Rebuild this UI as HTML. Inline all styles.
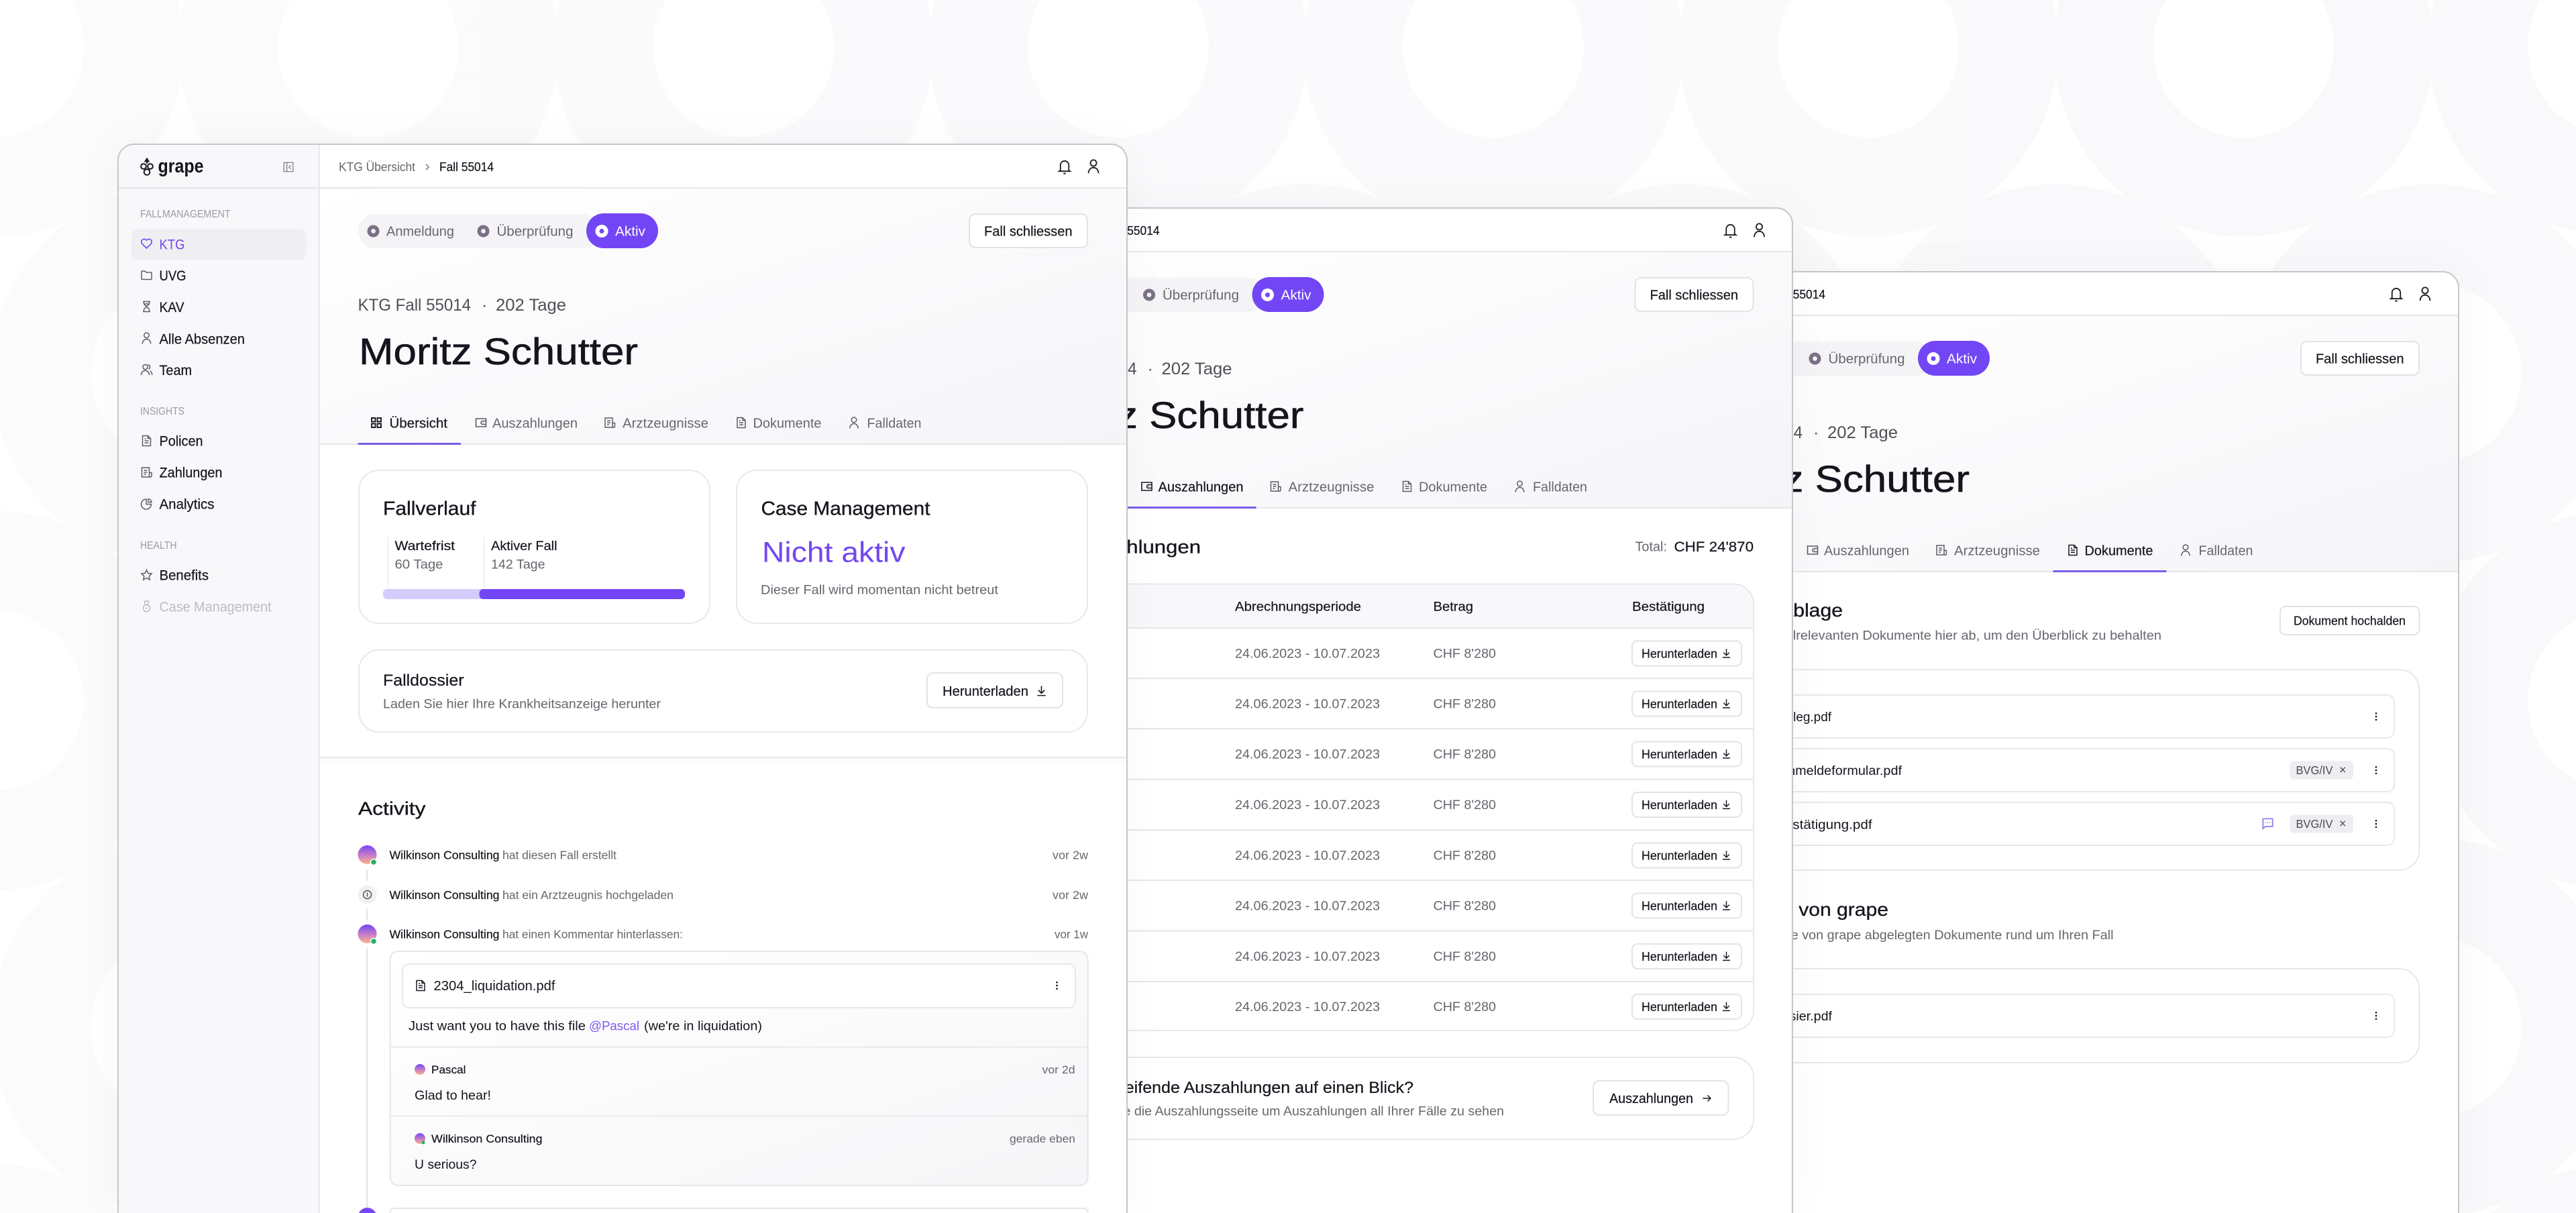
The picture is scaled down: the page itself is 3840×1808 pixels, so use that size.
<!DOCTYPE html>
<html lang="de"><head><meta charset="utf-8"><title>grape</title>
<style>
html,body{margin:0;padding:0;background:#fff;width:3840px;height:1808px;overflow:hidden}
svg{display:block}
text{font-family:"Liberation Sans",sans-serif;fill:#16141d;white-space:pre}
.g{fill:#66666e}.l{fill:#9b9ba3}.w{fill:#fff}.p{fill:#7346f1}
.m{stroke:#16141d;stroke-width:.22}
.h{stroke:#16141d;stroke-width:.35}
.n{stroke:#16141d;stroke-width:.6}
.i{color:#5c5c66}.k{color:#1b1922}.x{color:#7346f1}
.btn{fill:#fff;stroke:#e3e3e7;stroke-width:2}
.ln{stroke:#e6e6ea;stroke-width:2}
.crd{fill:#fff;stroke:#e8e8ec;stroke-width:2}
.win{fill:#fff;stroke:#c6c6cb;stroke-width:2}
</style></head><body>
<svg xmlns="http://www.w3.org/2000/svg" width="3840" height="1808" viewBox="0 0 3840 1808">
<defs>
<pattern id="pt" patternUnits="userSpaceOnUse" x="-10" y="70" width="1118" height="974">
<g fill="#f9f9fb"><circle cx="0" cy="0" r="283"/><circle cx="559" cy="0" r="283"/><circle cx="1118" cy="0" r="283"/><circle cx="-279" cy="487" r="283"/><circle cx="280" cy="487" r="283"/><circle cx="839" cy="487" r="283"/><circle cx="1398" cy="487" r="283"/><circle cx="0" cy="974" r="283"/><circle cx="559" cy="974" r="283"/><circle cx="1118" cy="974" r="283"/></g>
<g fill="#fff"><circle cx="0" cy="0" r="135"/><circle cx="559" cy="0" r="135"/><circle cx="1118" cy="0" r="135"/><circle cx="280" cy="487" r="135"/><circle cx="839" cy="487" r="135"/><circle cx="0" cy="974" r="135"/><circle cx="559" cy="974" r="135"/><circle cx="1118" cy="974" r="135"/></g>
</pattern>
<linearGradient id="ov" x1="0" y1="0" x2="1" y2="0"><stop offset="0" stop-color="#fff" stop-opacity=".35"/><stop offset="1" stop-color="#fff" stop-opacity="0"/></linearGradient>
<linearGradient id="hd" x1="0" y1="0" x2="1" y2="1"><stop offset="0" stop-color="#fff"/><stop offset="1" stop-color="#f5f5f8"/></linearGradient>
<linearGradient id="cm" x1="0" y1="0" x2="1" y2="1"><stop offset="0" stop-color="#fff"/><stop offset="1" stop-color="#f6f6f8"/></linearGradient>
<linearGradient id="av" x1="0" y1="0" x2="0" y2="1"><stop offset="0" stop-color="#7547f3"/><stop offset=".55" stop-color="#c77fc4"/><stop offset="1" stop-color="#ffb28e"/></linearGradient>
<linearGradient id="fd" x1="0" y1="0" x2="0" y2="1"><stop offset="0" stop-color="#f8f8fa"/><stop offset="1" stop-color="#fff"/></linearGradient>
<filter id="sh" x="-5%" y="-5%" width="110%" height="110%"><feDropShadow dx="0" dy="0" stdDeviation="28" flood-color="#000" flood-opacity=".03"/></filter>
<symbol id="heart" viewBox="0 0 20 20"><path d="M10 17 3.4 10.4A4.2 4.2 0 0 1 9.5 4.6l.5.5.5-.5a4.2 4.2 0 0 1 6.100 5.800z" fill="none" stroke="currentColor" stroke-width="1.600"/></symbol>
<symbol id="folder" viewBox="0 0 20 20"><path d="M2.500 5a1 1 0 0 1 1-1h4l2 2h7a1 1 0 0 1 1 1v8.500a1 1 0 0 1-1 1h-13a1 1 0 0 1-1-1z" fill="none" stroke="currentColor" stroke-width="1.500"/></symbol>
<symbol id="glass" viewBox="0 0 20 20"><path d="M4.500 2.500h11M4.500 17.500h11M6 2.500v3c0 2 4 3.500 4 4.500s-4 2.500-4 4.500v3M14 2.500v3c0 2-4 3.500-4 4.500s4 2.500 4 4.500v3M7 6h6" fill="none" stroke="currentColor" stroke-width="1.500"/></symbol>
<symbol id="user" viewBox="0 0 20 20"><circle cx="10" cy="5.800" r="3.800" fill="none" stroke="currentColor" stroke-width="1.500"/><path d="M3.800 18.500c0-4 2.600-7 6.200-7s6.200 3 6.200 7" fill="none" stroke="currentColor" stroke-width="1.500"/></symbol>
<symbol id="users" viewBox="0 0 20 20"><circle cx="8" cy="6" r="3.600" fill="none" stroke="currentColor" stroke-width="1.500"/><path d="M2 18c0-4 2.500-6.500 6-6.500s6 2.500 6 6.500M12 2.600a3.600 3.600 0 0 1 1 6.800M15.200 12c2 1 3 3 3 6" fill="none" stroke="currentColor" stroke-width="1.500"/></symbol>
<symbol id="doc" viewBox="0 0 20 20"><path d="M4 2.500h8l4 4v11H4zM12 2.500v4h4M7 10h6M7 13.200h6M7 7h2" fill="none" stroke="currentColor" stroke-width="1.500"/></symbol>
<symbol id="rcpt" viewBox="0 0 20 20"><path d="M3 3h11v14H3zM14 10.500h3.500v5a1.700 1.700 0 0 1-3.500 0M6 7h5M6 10h5M6 13h3" fill="none" stroke="currentColor" stroke-width="1.500"/></symbol>
<symbol id="pie" viewBox="0 0 20 20"><path d="M9.500 3a7.500 7.500 0 1 0 7.500 7.500H9.500zM12.500 2.500a6 6 0 0 1 5 5h-5z" fill="none" stroke="currentColor" stroke-width="1.500"/></symbol>
<symbol id="star" viewBox="0 0 20 20"><path d="M10 2.500l2.300 4.900 5.200.7-3.800 3.700 1 5.300L10 14.500l-4.700 2.600 1-5.300L2.500 8.100l5.200-.7z" fill="none" stroke="currentColor" stroke-width="1.500"/></symbol>
<symbol id="medal" viewBox="0 0 20 20"><circle cx="10" cy="12.500" r="5" fill="none" stroke="currentColor" stroke-width="1.500"/><path d="M7 2h6l-1.200 5.600H8.200zM8.500 12.500h3" fill="none" stroke="currentColor" stroke-width="1.500"/></symbol>
<symbol id="grid" viewBox="0 0 20 20"><path d="M3 3h5.500v5.500H3zM11.500 3H17v5.500h-5.500zM3 11.500h5.500V17H3zM11.500 11.500H17V17h-5.500z" fill="none" stroke="currentColor" stroke-width="1.900"/></symbol>
<symbol id="wal" viewBox="0 0 20 20"><path d="M2.500 4h15v12h-15zM17.500 7.500h-5a2.500 2.500 0 0 0 0 5h5M12.500 10h1" fill="none" stroke="currentColor" stroke-width="1.600"/></symbol>
<symbol id="bell" viewBox="0 0 20 20"><path d="M4.800 15V8.500a5.200 5.200 0 0 1 10.400 0V15l1.500 1H3.300zM8.500 18.800h3" fill="none" stroke="currentColor" stroke-width="1.500"/></symbol>
<symbol id="dl" viewBox="0 0 20 20"><path d="M10 2.500v11M5 9l5 5 5-5M3.500 17.500h13" fill="none" stroke="currentColor" stroke-width="1.700"/></symbol>
<symbol id="arr" viewBox="0 0 20 20"><path d="M3 10h13M11 5l5 5-5 5" fill="none" stroke="currentColor" stroke-width="1.700"/></symbol>
<symbol id="chev" viewBox="0 0 20 20"><path d="M7 4l6 6-6 6" fill="none" stroke="currentColor" stroke-width="1.800"/></symbol>
<symbol id="col" viewBox="0 0 20 20"><path d="M1.500 1.500h17v17h-17zM7 1.500v17M14.500 6.500 11 10l3.500 3.500" fill="none" stroke="currentColor" stroke-width="1.500"/></symbol>
<symbol id="chat" viewBox="0 0 20 20"><path d="M2.500 2.500h15v12H7l-4.500 3.500z" fill="none" stroke="currentColor" stroke-width="1.700"/><path d="M6.500 8.500h1M9.500 8.500h1M12.500 8.500h1" stroke="currentColor" stroke-width="1.700"/></symbol>
<symbol id="keb" viewBox="0 0 8 20"><circle cx="4" cy="4" r="1.700" fill="currentColor"/><circle cx="4" cy="10" r="1.700" fill="currentColor"/><circle cx="4" cy="16" r="1.700" fill="currentColor"/></symbol>
<symbol id="step" viewBox="0 0 20 20"><circle cx="10" cy="10" r="9.500" fill="currentColor"/><circle cx="10" cy="10" r="3.500" fill="#f4f4f6"/></symbol>
</defs>

<!-- background -->
<rect width="3840" height="1808" fill="#fff"/>
<rect width="3840" height="1808" fill="url(#pt)"/>
<rect width="3840" height="1808" fill="url(#ov)"/>

<!-- WINDOW 3 -->
<g transform="translate(1985,190)">
<path d="M176 1618V239a24 24 0 0 1 24-24H1656a24 24 0 0 1 24 24V1618" class="win" filter="url(#sh)"/>
<rect x="477" y="280" width="1202" height="382" fill="url(#hd)"/>
<line x1="477" y1="280" x2="1679" y2="280" class="ln"/>
<line x1="477" y1="662" x2="1679" y2="662" class="ln"/>
<text x="505" y="255" font-size="18.500" textLength="114" lengthAdjust="spacingAndGlyphs" class="g">KTG Übersicht</text>
<text x="655" y="255" font-size="18.500" textLength="81" lengthAdjust="spacingAndGlyphs" class="m">Fall 55014</text>
<use href="#bell" x="1575" y="236" width="24" height="24" class="k"/>
<use href="#user" x="1618" y="236" width="24" height="24" class="k"/>
<rect x="534" y="319" width="360" height="51" rx="25.500" fill="#f4f4f6"/>
<use href="#step" x="547" y="335" width="19" height="19" style="color:#7b7086"/>
<text x="576" y="351.500" font-size="20.500" textLength="101" lengthAdjust="spacingAndGlyphs" class="g">Anmeldung</text>
<use href="#step" x="711" y="335" width="19" height="19" style="color:#7b7086"/>
<text x="740.500" y="351.500" font-size="20.500" textLength="114" lengthAdjust="spacingAndGlyphs" class="g">Überprüfung</text>
<rect x="874" y="318" width="107" height="52" rx="26" fill="#7346f5"/>
<circle cx="897" cy="344.500" r="9.500" fill="#fff"/><circle cx="897" cy="344.500" r="3.500" fill="#7346f5"/>
<text x="917" y="351.500" font-size="20.500" textLength="45" lengthAdjust="spacingAndGlyphs" class="w">Aktiv</text>
<rect x="1445" y="319" width="176" height="50" rx="9" class="btn"/>
<text x="1467" y="351.500" font-size="20" textLength="131.500" lengthAdjust="spacingAndGlyphs" class="m">Fall schliessen</text>
<text x="533.500" y="463" font-size="25" textLength="168.500" lengthAdjust="spacingAndGlyphs" style="fill:#4f4f57">KTG Fall 55014</text>
<text x="718" y="463" font-size="25" style="fill:#4f4f57">·</text>
<text x="739" y="463" font-size="25" textLength="105" lengthAdjust="spacingAndGlyphs" style="fill:#4f4f57">202 Tage</text>
<text x="535" y="543" font-size="56" textLength="416" lengthAdjust="spacingAndGlyphs" class="n">Moritz Schutter</text>
<use href="#wal" x="707" y="620" width="20" height="20" class="i"/>
<text x="734" y="637.500" font-size="20" textLength="127" lengthAdjust="spacingAndGlyphs" class="g">Auszahlungen</text>
<use href="#rcpt" x="899" y="620" width="20" height="20" class="i"/>
<text x="928" y="637.500" font-size="20" textLength="128" lengthAdjust="spacingAndGlyphs" class="g">Arztzeugnisse</text>
<use href="#doc" x="1095" y="620" width="20" height="20" class="k"/>
<text x="1122.500" y="637.500" font-size="20" textLength="102" lengthAdjust="spacingAndGlyphs" class="m">Dokumente</text>
<use href="#user" x="1263" y="620" width="20" height="20" class="i"/>
<text x="1292.500" y="637.500" font-size="20" textLength="81" lengthAdjust="spacingAndGlyphs" class="g">Falldaten</text>
<rect x="1075.500" y="660" width="169" height="3" fill="#7b5ce8"/>
</g>
<text x="2519" y="919" font-size="28" textLength="228" lengthAdjust="spacingAndGlyphs" class="h">Dokumentablage</text>
<text x="2519" y="953.500" font-size="19.500" textLength="703" lengthAdjust="spacingAndGlyphs" class="g">Legen Sie alle fallrelevanten Dokumente hier ab, um den Überblick zu behalten</text>
<rect x="3399" y="904" width="207.500" height="42" rx="8" class="btn"/>
<text x="3419" y="931.500" font-size="18" textLength="167" lengthAdjust="spacingAndGlyphs" class="m">Dokument hochalden</text>
<rect x="2520" y="998" width="1086.500" height="299" rx="30" class="crd"/>
<rect x="2557" y="1036" width="1012" height="64" rx="10" class="crd"/>
<rect x="2557" y="1116" width="1012" height="64" rx="10" class="crd"/>
<rect x="2557" y="1196" width="1012" height="64" rx="10" class="crd"/>
<text x="2610" y="1075" font-size="19.500" textLength="120" lengthAdjust="spacingAndGlyphs">Lohnbeleg.pdf</text>
<text x="2600" y="1155" font-size="19.500" textLength="235" lengthAdjust="spacingAndGlyphs">KTG_Anmeldeformular.pdf</text>
<text x="2585" y="1235.500" font-size="19.500" textLength="205.600" lengthAdjust="spacingAndGlyphs">Arbeitsbestätigung.pdf</text>
<use href="#keb" x="3538.800" y="1060" width="6.400" height="16" class="k"/>
<use href="#keb" x="3538.800" y="1140" width="6.400" height="16" class="k"/>
<use href="#keb" x="3538.800" y="1220" width="6.400" height="16" class="k"/>
<rect x="3413.500" y="1134.500" width="94.500" height="27" rx="6" fill="#eeeef2"/>
<text x="3422.500" y="1154" font-size="17.500" textLength="55" lengthAdjust="spacingAndGlyphs" style="fill:#4a4a52">BVG/IV</text>
<text x="3487" y="1153.500" font-size="18" style="fill:#4a4a52">×</text>
<rect x="3413.500" y="1214.500" width="94.500" height="27" rx="6" fill="#eeeef2"/>
<text x="3422.500" y="1234" font-size="17.500" textLength="55" lengthAdjust="spacingAndGlyphs" style="fill:#4a4a52">BVG/IV</text>
<text x="3487" y="1233.500" font-size="18" style="fill:#4a4a52">×</text>
<use href="#chat" x="3371" y="1218" width="19" height="19" style="color:#8a6cf0"/>
<text x="2519" y="1365" font-size="28" textLength="296" lengthAdjust="spacingAndGlyphs" class="h">Dokumente von grape</text>
<text x="2519" y="1400" font-size="19.500" textLength="631.500" lengthAdjust="spacingAndGlyphs" class="g">Hier finden Sie die von grape abgelegten Dokumente rund um Ihren Fall</text>
<rect x="2520" y="1444" width="1086.500" height="140" rx="30" class="crd"/>
<rect x="2557" y="1482" width="1012" height="64" rx="10" class="crd"/>
<text x="2604" y="1521" font-size="19.500" textLength="127" lengthAdjust="spacingAndGlyphs">Falldossier.pdf</text>
<use href="#keb" x="3538.800" y="1506" width="6.400" height="16" class="k"/>

<!-- WINDOW 2 -->
<g transform="translate(992.500,95)">
<path d="M176 1713V239a24 24 0 0 1 24-24H1655.500a24 24 0 0 1 24 24V1713" class="win" filter="url(#sh)"/>
<rect x="477" y="280" width="1201.500" height="382" fill="url(#hd)"/>
<line x1="477" y1="280" x2="1679" y2="280" class="ln"/>
<line x1="477" y1="662" x2="1679" y2="662" class="ln"/>
<text x="505" y="255" font-size="18.500" textLength="114" lengthAdjust="spacingAndGlyphs" class="g">KTG Übersicht</text>
<text x="655" y="255" font-size="18.500" textLength="81" lengthAdjust="spacingAndGlyphs" class="m">Fall 55014</text>
<use href="#bell" x="1575" y="236" width="24" height="24" class="k"/>
<use href="#user" x="1618" y="236" width="24" height="24" class="k"/>
<rect x="534" y="319" width="360" height="51" rx="25.500" fill="#f4f4f6"/>
<use href="#step" x="547" y="335" width="19" height="19" style="color:#7b7086"/>
<text x="576" y="351.500" font-size="20.500" textLength="101" lengthAdjust="spacingAndGlyphs" class="g">Anmeldung</text>
<use href="#step" x="711" y="335" width="19" height="19" style="color:#7b7086"/>
<text x="740.500" y="351.500" font-size="20.500" textLength="114" lengthAdjust="spacingAndGlyphs" class="g">Überprüfung</text>
<rect x="874" y="318" width="107" height="52" rx="26" fill="#7346f5"/>
<circle cx="897" cy="344.500" r="9.500" fill="#fff"/><circle cx="897" cy="344.500" r="3.500" fill="#7346f5"/>
<text x="917" y="351.500" font-size="20.500" textLength="45" lengthAdjust="spacingAndGlyphs" class="w">Aktiv</text>
<rect x="1445" y="319" width="176" height="50" rx="9" class="btn"/>
<text x="1467" y="351.500" font-size="20" textLength="131.500" lengthAdjust="spacingAndGlyphs" class="m">Fall schliessen</text>
<text x="533.500" y="463" font-size="25" textLength="168.500" lengthAdjust="spacingAndGlyphs" style="fill:#4f4f57">KTG Fall 55014</text>
<text x="718" y="463" font-size="25" style="fill:#4f4f57">·</text>
<text x="739" y="463" font-size="25" textLength="105" lengthAdjust="spacingAndGlyphs" style="fill:#4f4f57">202 Tage</text>
<text x="535" y="543" font-size="56" textLength="416" lengthAdjust="spacingAndGlyphs" class="n">Moritz Schutter</text>
<use href="#wal" x="707" y="620" width="20" height="20" class="k"/>
<text x="734" y="637.500" font-size="20" textLength="127" lengthAdjust="spacingAndGlyphs" class="m">Auszahlungen</text>
<use href="#rcpt" x="899" y="620" width="20" height="20" class="i"/>
<text x="928" y="637.500" font-size="20" textLength="128" lengthAdjust="spacingAndGlyphs" class="g">Arztzeugnisse</text>
<use href="#doc" x="1095" y="620" width="20" height="20" class="i"/>
<text x="1122.500" y="637.500" font-size="20" textLength="102" lengthAdjust="spacingAndGlyphs" class="g">Dokumente</text>
<use href="#user" x="1263" y="620" width="20" height="20" class="i"/>
<text x="1292.500" y="637.500" font-size="20" textLength="81" lengthAdjust="spacingAndGlyphs" class="g">Falldaten</text>
<rect x="680" y="660" width="200" height="3" fill="#7b5ce8"/>
</g>
<text x="1534" y="824.500" font-size="28" textLength="256" lengthAdjust="spacingAndGlyphs" class="h">Alle Auszahlungen</text>
<text x="2437.500" y="821.500" font-size="20" textLength="47.500" lengthAdjust="spacingAndGlyphs" class="g">Total:</text>
<text x="2495.500" y="822" font-size="21" textLength="118.500" lengthAdjust="spacingAndGlyphs" class="m">CHF 24'870</text>
<rect x="1527" y="870.500" width="1087" height="665.500" rx="30" class="crd"/>
<path d="M1527 936v-35.500a30 30 0 0 1 30-30h1027a30 30 0 0 1 30 30V936z" fill="#f8f8fa" stroke="#e8e8ec" stroke-width="2"/>
<text x="1841" y="910.500" font-size="19" textLength="188" lengthAdjust="spacingAndGlyphs" class="m">Abrechnungsperiode</text>
<text x="2136.500" y="910.500" font-size="19" textLength="59.500" lengthAdjust="spacingAndGlyphs" class="m">Betrag</text>
<text x="2433" y="910.500" font-size="19" textLength="108" lengthAdjust="spacingAndGlyphs" class="m">Bestätigung</text>
<g class="ln"><line x1="1527" y1="1011" x2="2614" y2="1011"/><line x1="1527" y1="1086" x2="2614" y2="1086"/><line x1="1527" y1="1161.500" x2="2614" y2="1161.500"/><line x1="1527" y1="1237" x2="2614" y2="1237"/><line x1="1527" y1="1312" x2="2614" y2="1312"/><line x1="1527" y1="1387.500" x2="2614" y2="1387.500"/><line x1="1527" y1="1463" x2="2614" y2="1463"/></g>
<g>
<text x="1841" y="980.500" font-size="19" textLength="216" lengthAdjust="spacingAndGlyphs" class="g">24.06.2023 - 10.07.2023</text><text x="2136.500" y="980.500" font-size="19" textLength="93.500" lengthAdjust="spacingAndGlyphs" class="g">CHF 8'280</text>
<rect x="2433" y="955.500" width="163" height="37" rx="8" class="btn"/><text x="2447" y="980.500" font-size="18" textLength="113" lengthAdjust="spacingAndGlyphs" class="m">Herunterladen</text><use href="#dl" x="2565" y="965" width="17" height="17" class="k"/>
<text x="1841" y="1055.500" font-size="19" textLength="216" lengthAdjust="spacingAndGlyphs" class="g">24.06.2023 - 10.07.2023</text><text x="2136.500" y="1055.500" font-size="19" textLength="93.500" lengthAdjust="spacingAndGlyphs" class="g">CHF 8'280</text>
<rect x="2433" y="1030.500" width="163" height="37" rx="8" class="btn"/><text x="2447" y="1055.500" font-size="18" textLength="113" lengthAdjust="spacingAndGlyphs" class="m">Herunterladen</text><use href="#dl" x="2565" y="1040" width="17" height="17" class="k"/>
<text x="1841" y="1130.500" font-size="19" textLength="216" lengthAdjust="spacingAndGlyphs" class="g">24.06.2023 - 10.07.2023</text><text x="2136.500" y="1130.500" font-size="19" textLength="93.500" lengthAdjust="spacingAndGlyphs" class="g">CHF 8'280</text>
<rect x="2433" y="1105.500" width="163" height="37" rx="8" class="btn"/><text x="2447" y="1130.500" font-size="18" textLength="113" lengthAdjust="spacingAndGlyphs" class="m">Herunterladen</text><use href="#dl" x="2565" y="1115" width="17" height="17" class="k"/>
<text x="1841" y="1206" font-size="19" textLength="216" lengthAdjust="spacingAndGlyphs" class="g">24.06.2023 - 10.07.2023</text><text x="2136.500" y="1206" font-size="19" textLength="93.500" lengthAdjust="spacingAndGlyphs" class="g">CHF 8'280</text>
<rect x="2433" y="1181" width="163" height="37" rx="8" class="btn"/><text x="2447" y="1206" font-size="18" textLength="113" lengthAdjust="spacingAndGlyphs" class="m">Herunterladen</text><use href="#dl" x="2565" y="1190.500" width="17" height="17" class="k"/>
<text x="1841" y="1281.500" font-size="19" textLength="216" lengthAdjust="spacingAndGlyphs" class="g">24.06.2023 - 10.07.2023</text><text x="2136.500" y="1281.500" font-size="19" textLength="93.500" lengthAdjust="spacingAndGlyphs" class="g">CHF 8'280</text>
<rect x="2433" y="1256.500" width="163" height="37" rx="8" class="btn"/><text x="2447" y="1281.500" font-size="18" textLength="113" lengthAdjust="spacingAndGlyphs" class="m">Herunterladen</text><use href="#dl" x="2565" y="1266" width="17" height="17" class="k"/>
<text x="1841" y="1356.500" font-size="19" textLength="216" lengthAdjust="spacingAndGlyphs" class="g">24.06.2023 - 10.07.2023</text><text x="2136.500" y="1356.500" font-size="19" textLength="93.500" lengthAdjust="spacingAndGlyphs" class="g">CHF 8'280</text>
<rect x="2433" y="1331.500" width="163" height="37" rx="8" class="btn"/><text x="2447" y="1356.500" font-size="18" textLength="113" lengthAdjust="spacingAndGlyphs" class="m">Herunterladen</text><use href="#dl" x="2565" y="1341" width="17" height="17" class="k"/>
<text x="1841" y="1432" font-size="19" textLength="216" lengthAdjust="spacingAndGlyphs" class="g">24.06.2023 - 10.07.2023</text><text x="2136.500" y="1432" font-size="19" textLength="93.500" lengthAdjust="spacingAndGlyphs" class="g">CHF 8'280</text>
<rect x="2433" y="1407" width="163" height="37" rx="8" class="btn"/><text x="2447" y="1432" font-size="18" textLength="113" lengthAdjust="spacingAndGlyphs" class="m">Herunterladen</text><use href="#dl" x="2565" y="1416.500" width="17" height="17" class="k"/>
<text x="1841" y="1507" font-size="19" textLength="216" lengthAdjust="spacingAndGlyphs" class="g">24.06.2023 - 10.07.2023</text><text x="2136.500" y="1507" font-size="19" textLength="93.500" lengthAdjust="spacingAndGlyphs" class="g">CHF 8'280</text>
<rect x="2433" y="1482" width="163" height="37" rx="8" class="btn"/><text x="2447" y="1507" font-size="18" textLength="113" lengthAdjust="spacingAndGlyphs" class="m">Herunterladen</text><use href="#dl" x="2565" y="1491.500" width="17" height="17" class="k"/>
</g>
<rect x="1527" y="1576" width="1087" height="122" rx="30" class="crd"/>
<text x="1564" y="1629" font-size="24.500" textLength="543" lengthAdjust="spacingAndGlyphs" class="m">Fallübergreifende Auszahlungen auf einen Blick?</text>
<text x="1564" y="1662.500" font-size="19.500" textLength="678" lengthAdjust="spacingAndGlyphs" class="g">Besuchen Sie die Auszahlungsseite um Auszahlungen all Ihrer Fälle zu sehen</text>
<rect x="2375" y="1611" width="201.500" height="51" rx="9" class="btn"/>
<text x="2399" y="1644" font-size="20" textLength="125" lengthAdjust="spacingAndGlyphs" class="m">Auszahlungen</text>
<use href="#arr" x="2535.500" y="1628" width="18" height="18" class="k"/>

<!-- WINDOW 1 -->
<path d="M176 1808V239a24 24 0 0 1 24-24H1656a24 24 0 0 1 24 24V1808" class="win" filter="url(#sh)"/>
<path d="M177 1808V240a24 24 0 0 1 24-24H476V1808z" fill="#f8f8fa"/>
<line x1="476" y1="216" x2="476" y2="1808" stroke="#e8e8ec" stroke-width="2"/>
<line x1="177" y1="280" x2="1679" y2="280" class="ln"/>
<rect x="477" y="281" width="1202" height="381" fill="url(#hd)"/>
<line x1="477" y1="662" x2="1679" y2="662" class="ln"/>
<rect x="477" y="1129" width="1202" height="14" fill="url(#fd)"/>
<line x1="477" y1="1129" x2="1679" y2="1129" stroke="#e6e6ea" stroke-width="2"/>

<g fill="none" stroke="#1b1922" stroke-width="2"><circle cx="214" cy="248" r="3.900"/><circle cx="224" cy="248" r="3.900"/><circle cx="219" cy="256.500" r="4.300"/><path d="M219 244V236M216.500 240.500 219 236.500l2.500 4z"/></g>
<text x="235.500" y="257" font-size="29" textLength="68" lengthAdjust="spacingAndGlyphs" font-weight="700">grape</text>
<use href="#col" x="422" y="241" width="16" height="16" style="color:#75757d"/>

<text x="209" y="324" font-size="15.500" textLength="134.500" lengthAdjust="spacingAndGlyphs" class="l">FALLMANAGEMENT</text>
<rect x="196" y="341" width="261" height="46" rx="10" fill="#efeff3"/>
<use href="#heart" x="208.500" y="353" width="20" height="20" class="x"/>
<text x="237.500" y="371.500" font-size="21" textLength="38" lengthAdjust="spacingAndGlyphs" class="p">KTG</text>
<use href="#folder" x="208.500" y="400" width="20" height="20" class="i"/>
<text x="237.500" y="418" font-size="21" textLength="40" lengthAdjust="spacingAndGlyphs" class="m">UVG</text>
<use href="#glass" x="208.500" y="447" width="20" height="20" class="i"/>
<text x="237.500" y="465" font-size="21" textLength="37" lengthAdjust="spacingAndGlyphs" class="m">KAV</text>
<use href="#user" x="208.500" y="494" width="20" height="20" class="i"/>
<text x="237.500" y="512.500" font-size="21" textLength="127.500" lengthAdjust="spacingAndGlyphs" class="m">Alle Absenzen</text>
<use href="#users" x="208.500" y="541" width="20" height="20" class="i"/>
<text x="237.500" y="559" font-size="21" textLength="48.500" lengthAdjust="spacingAndGlyphs" class="m">Team</text>
<text x="209" y="618" font-size="15.500" textLength="66" lengthAdjust="spacingAndGlyphs" class="l">INSIGHTS</text>
<use href="#doc" x="208.500" y="647" width="20" height="20" class="i"/>
<text x="237.500" y="664.500" font-size="21" textLength="65" lengthAdjust="spacingAndGlyphs" class="m">Policen</text>
<use href="#rcpt" x="208.500" y="694" width="20" height="20" class="i"/>
<text x="237.500" y="711.500" font-size="21" textLength="94" lengthAdjust="spacingAndGlyphs" class="m">Zahlungen</text>
<use href="#pie" x="208.500" y="741" width="20" height="20" class="i"/>
<text x="237.500" y="758.500" font-size="21" textLength="82" lengthAdjust="spacingAndGlyphs" class="m">Analytics</text>
<text x="209" y="818" font-size="15.500" textLength="54.500" lengthAdjust="spacingAndGlyphs" class="l">HEALTH</text>
<use href="#star" x="208.500" y="847" width="20" height="20" class="i"/>
<text x="237.500" y="864.500" font-size="21" textLength="73.500" lengthAdjust="spacingAndGlyphs" class="m">Benefits</text>
<use href="#medal" x="208.500" y="894" width="20" height="20" style="color:#bcbcc2"/>
<text x="237.500" y="911.500" font-size="21" textLength="167" lengthAdjust="spacingAndGlyphs" style="fill:#bcbcc2">Case Management</text>

<text x="505" y="255" font-size="18.500" textLength="114" lengthAdjust="spacingAndGlyphs" class="g">KTG Übersicht</text>
<use href="#chev" x="630" y="242" width="14" height="14" class="i"/>
<text x="655" y="255" font-size="18.500" textLength="81" lengthAdjust="spacingAndGlyphs" class="m">Fall 55014</text>
<use href="#bell" x="1575" y="236" width="24" height="24" class="k"/>
<use href="#user" x="1618" y="236" width="24" height="24" class="k"/>
<rect x="534" y="319" width="360" height="51" rx="25.500" fill="#f4f4f6"/>
<use href="#step" x="547" y="335" width="19" height="19" style="color:#7b7086"/>
<text x="576" y="351.500" font-size="20.500" textLength="101" lengthAdjust="spacingAndGlyphs" class="g">Anmeldung</text>
<use href="#step" x="711" y="335" width="19" height="19" style="color:#7b7086"/>
<text x="740.500" y="351.500" font-size="20.500" textLength="114" lengthAdjust="spacingAndGlyphs" class="g">Überprüfung</text>
<rect x="874" y="318" width="107" height="52" rx="26" fill="#7346f5"/>
<circle cx="897" cy="344.500" r="9.500" fill="#fff"/><circle cx="897" cy="344.500" r="3.500" fill="#7346f5"/>
<text x="917" y="351.500" font-size="20.500" textLength="45" lengthAdjust="spacingAndGlyphs" class="w">Aktiv</text>
<rect x="1445" y="319" width="176" height="50" rx="9" class="btn"/>
<text x="1467" y="351.500" font-size="20" textLength="131.500" lengthAdjust="spacingAndGlyphs" class="m">Fall schliessen</text>
<text x="533.500" y="463" font-size="25" textLength="168.500" lengthAdjust="spacingAndGlyphs" style="fill:#4f4f57">KTG Fall 55014</text>
<text x="718" y="463" font-size="25" style="fill:#4f4f57">·</text>
<text x="739" y="463" font-size="25" textLength="105" lengthAdjust="spacingAndGlyphs" style="fill:#4f4f57">202 Tage</text>
<text x="535" y="543" font-size="56" textLength="416" lengthAdjust="spacingAndGlyphs" class="n">Moritz Schutter</text>
<use href="#grid" x="551" y="620" width="20" height="20" class="k"/>
<text x="580.500" y="637.500" font-size="20" textLength="86.500" lengthAdjust="spacingAndGlyphs" class="m">Übersicht</text>
<use href="#wal" x="707" y="620" width="20" height="20" class="i"/>
<text x="734" y="637.500" font-size="20" textLength="127" lengthAdjust="spacingAndGlyphs" class="g">Auszahlungen</text>
<use href="#rcpt" x="899" y="620" width="20" height="20" class="i"/>
<text x="928" y="637.500" font-size="20" textLength="128" lengthAdjust="spacingAndGlyphs" class="g">Arztzeugnisse</text>
<use href="#doc" x="1095" y="620" width="20" height="20" class="i"/>
<text x="1122.500" y="637.500" font-size="20" textLength="102" lengthAdjust="spacingAndGlyphs" class="g">Dokumente</text>
<use href="#user" x="1263" y="620" width="20" height="20" class="i"/>
<text x="1292.500" y="637.500" font-size="20" textLength="81" lengthAdjust="spacingAndGlyphs" class="g">Falldaten</text>
<rect x="533.500" y="660" width="153.500" height="3" fill="#7b5ce8"/>

<rect x="535" y="701" width="523" height="228" rx="30" class="crd"/>
<rect x="1098" y="701" width="523" height="228" rx="30" class="crd"/>
<text x="571" y="767.500" font-size="29" textLength="138.500" lengthAdjust="spacingAndGlyphs" class="h">Fallverlauf</text>
<line x1="578.300" y1="800" x2="578.300" y2="878" stroke="#ececf0" stroke-width="1.500"/>
<line x1="721.500" y1="800" x2="721.500" y2="878" stroke="#ececf0" stroke-width="1.500"/>
<text x="588.500" y="820" font-size="19.500" textLength="89.500" lengthAdjust="spacingAndGlyphs" class="m">Wartefrist</text>
<text x="588.500" y="847.500" font-size="19.500" textLength="72" lengthAdjust="spacingAndGlyphs" class="g">60 Tage</text>
<text x="732" y="820" font-size="19.500" textLength="98.500" lengthAdjust="spacingAndGlyphs" class="m">Aktiver Fall</text>
<text x="732" y="847.500" font-size="19.500" textLength="80.500" lengthAdjust="spacingAndGlyphs" class="g">142 Tage</text>
<rect x="571" y="878" width="450" height="15" rx="6" fill="#d4ccfb"/>
<rect x="714.500" y="878" width="306.500" height="15" rx="6" fill="#7346f5"/>
<text x="1134.500" y="767.500" font-size="29" textLength="252" lengthAdjust="spacingAndGlyphs" class="h">Case Management</text>
<text x="1136" y="837.500" font-size="43" textLength="213.500" lengthAdjust="spacingAndGlyphs" class="p">Nicht aktiv</text>
<text x="1134" y="885.500" font-size="19.500" textLength="354" lengthAdjust="spacingAndGlyphs" class="g">Dieser Fall wird momentan nicht betreut</text>
<rect x="535" y="969" width="1086" height="122" rx="30" class="crd"/>
<text x="571" y="1022" font-size="24.500" textLength="120.500" lengthAdjust="spacingAndGlyphs" class="m">Falldossier</text>
<text x="571" y="1055.500" font-size="19.500" textLength="414" lengthAdjust="spacingAndGlyphs" class="g">Laden Sie hier Ihre Krankheitsanzeige herunter</text>
<rect x="1382" y="1003" width="202" height="52" rx="9" class="btn"/>
<text x="1405" y="1037" font-size="20" textLength="128" lengthAdjust="spacingAndGlyphs" class="m">Herunterladen</text>
<use href="#dl" x="1543" y="1020" width="19" height="19" class="k"/>

<text x="534" y="1214.500" font-size="28" textLength="100.500" lengthAdjust="spacingAndGlyphs" class="h">Activity</text>
<g stroke="#e4e4e8" stroke-width="2">
<line x1="547" y1="1296" x2="547" y2="1313"/><line x1="547" y1="1354" x2="547" y2="1372"/><line x1="547" y1="1413" x2="547" y2="1800"/>
</g>
<circle cx="547.500" cy="1274" r="14" fill="url(#av)"/><circle cx="557" cy="1285" r="4.500" fill="#22b35e" stroke="#fff" stroke-width="1.500"/>
<text x="580.500" y="1280.500" font-size="17.500" textLength="164" lengthAdjust="spacingAndGlyphs" class="m">Wilkinson Consulting</text>
<text x="749" y="1280.500" font-size="17.500" textLength="170" lengthAdjust="spacingAndGlyphs" class="g">hat diesen Fall erstellt</text>
<text x="1569" y="1280.500" font-size="17.500" textLength="53" lengthAdjust="spacingAndGlyphs" class="g">vor 2w</text>
<circle cx="547.500" cy="1333.500" r="14" fill="#f0f0f3"/><circle cx="547.500" cy="1333.500" r="6" fill="none" stroke="#55555e" stroke-width="1.500"/><line x1="547.500" y1="1330.500" x2="547.500" y2="1336.500" stroke="#55555e" stroke-width="1.500"/>
<text x="580.500" y="1340" font-size="17.500" textLength="164" lengthAdjust="spacingAndGlyphs" class="m">Wilkinson Consulting</text>
<text x="749" y="1340" font-size="17.500" textLength="255" lengthAdjust="spacingAndGlyphs" class="g">hat ein Arztzeugnis hochgeladen</text>
<text x="1569" y="1340" font-size="17.500" textLength="53" lengthAdjust="spacingAndGlyphs" class="g">vor 2w</text>
<circle cx="547.500" cy="1392" r="14" fill="url(#av)"/><circle cx="557" cy="1403" r="4.500" fill="#22b35e" stroke="#fff" stroke-width="1.500"/>
<text x="580.500" y="1398.500" font-size="17.500" textLength="164" lengthAdjust="spacingAndGlyphs" class="m">Wilkinson Consulting</text>
<text x="749" y="1398.500" font-size="17.500" textLength="269" lengthAdjust="spacingAndGlyphs" class="g">hat einen Kommentar hinterlassen:</text>
<text x="1572" y="1398.500" font-size="17.500" textLength="50" lengthAdjust="spacingAndGlyphs" class="g">vor 1w</text>

<rect x="581.500" y="1418" width="1040" height="349" rx="12" fill="url(#cm)" stroke="#e6e6ea" stroke-width="2"/>
<rect x="600" y="1437" width="1003" height="65" rx="10" class="crd"/>
<use href="#doc" x="617" y="1459" width="20" height="20" class="k"/>
<text x="646.500" y="1476" font-size="20" textLength="181" lengthAdjust="spacingAndGlyphs">2304_liquidation.pdf</text>
<use href="#keb" x="1572.300" y="1461" width="6.400" height="16" class="k"/>
<text x="609" y="1535.500" font-size="19.500" textLength="264" lengthAdjust="spacingAndGlyphs">Just want you to have this file</text>
<text x="878" y="1535.500" font-size="19.500" textLength="75" lengthAdjust="spacingAndGlyphs" style="fill:#7d5cf0">@Pascal</text>
<text x="960" y="1535.500" font-size="19.500" textLength="176" lengthAdjust="spacingAndGlyphs">(we're in liquidation)</text>
<line x1="582" y1="1560.500" x2="1621" y2="1560.500" stroke="#e4e4e8" stroke-width="1.500"/>
<circle cx="626" cy="1594" r="8" fill="url(#av)"/>
<text x="643" y="1600" font-size="17" textLength="51.500" lengthAdjust="spacingAndGlyphs" class="m">Pascal</text>
<text x="1553.500" y="1600" font-size="17" textLength="49" lengthAdjust="spacingAndGlyphs" class="g">vor 2d</text>
<text x="618" y="1639" font-size="19.500" textLength="114" lengthAdjust="spacingAndGlyphs">Glad to hear!</text>
<line x1="582" y1="1663.500" x2="1621" y2="1663.500" stroke="#e4e4e8" stroke-width="1.500"/>
<circle cx="626" cy="1697" r="8" fill="url(#av)"/><circle cx="631" cy="1703" r="2.500" fill="#22b35e"/>
<text x="643" y="1703" font-size="17" textLength="165.500" lengthAdjust="spacingAndGlyphs" class="m">Wilkinson Consulting</text>
<text x="1505" y="1703" font-size="17" textLength="98" lengthAdjust="spacingAndGlyphs" class="g">gerade eben</text>
<text x="618" y="1742" font-size="19.500" textLength="92.500" lengthAdjust="spacingAndGlyphs">U serious?</text>
<path d="M534.900 1808A14 14 0 0 1 560.100 1808z" fill="#7547f3"/>
<path d="M581.500 1808v-1a6 6 0 0 1 6-6H1615.500a6 6 0 0 1 6 6v1" fill="#fff" stroke="#e6e6ea" stroke-width="2"/>
</svg>
</body></html>
